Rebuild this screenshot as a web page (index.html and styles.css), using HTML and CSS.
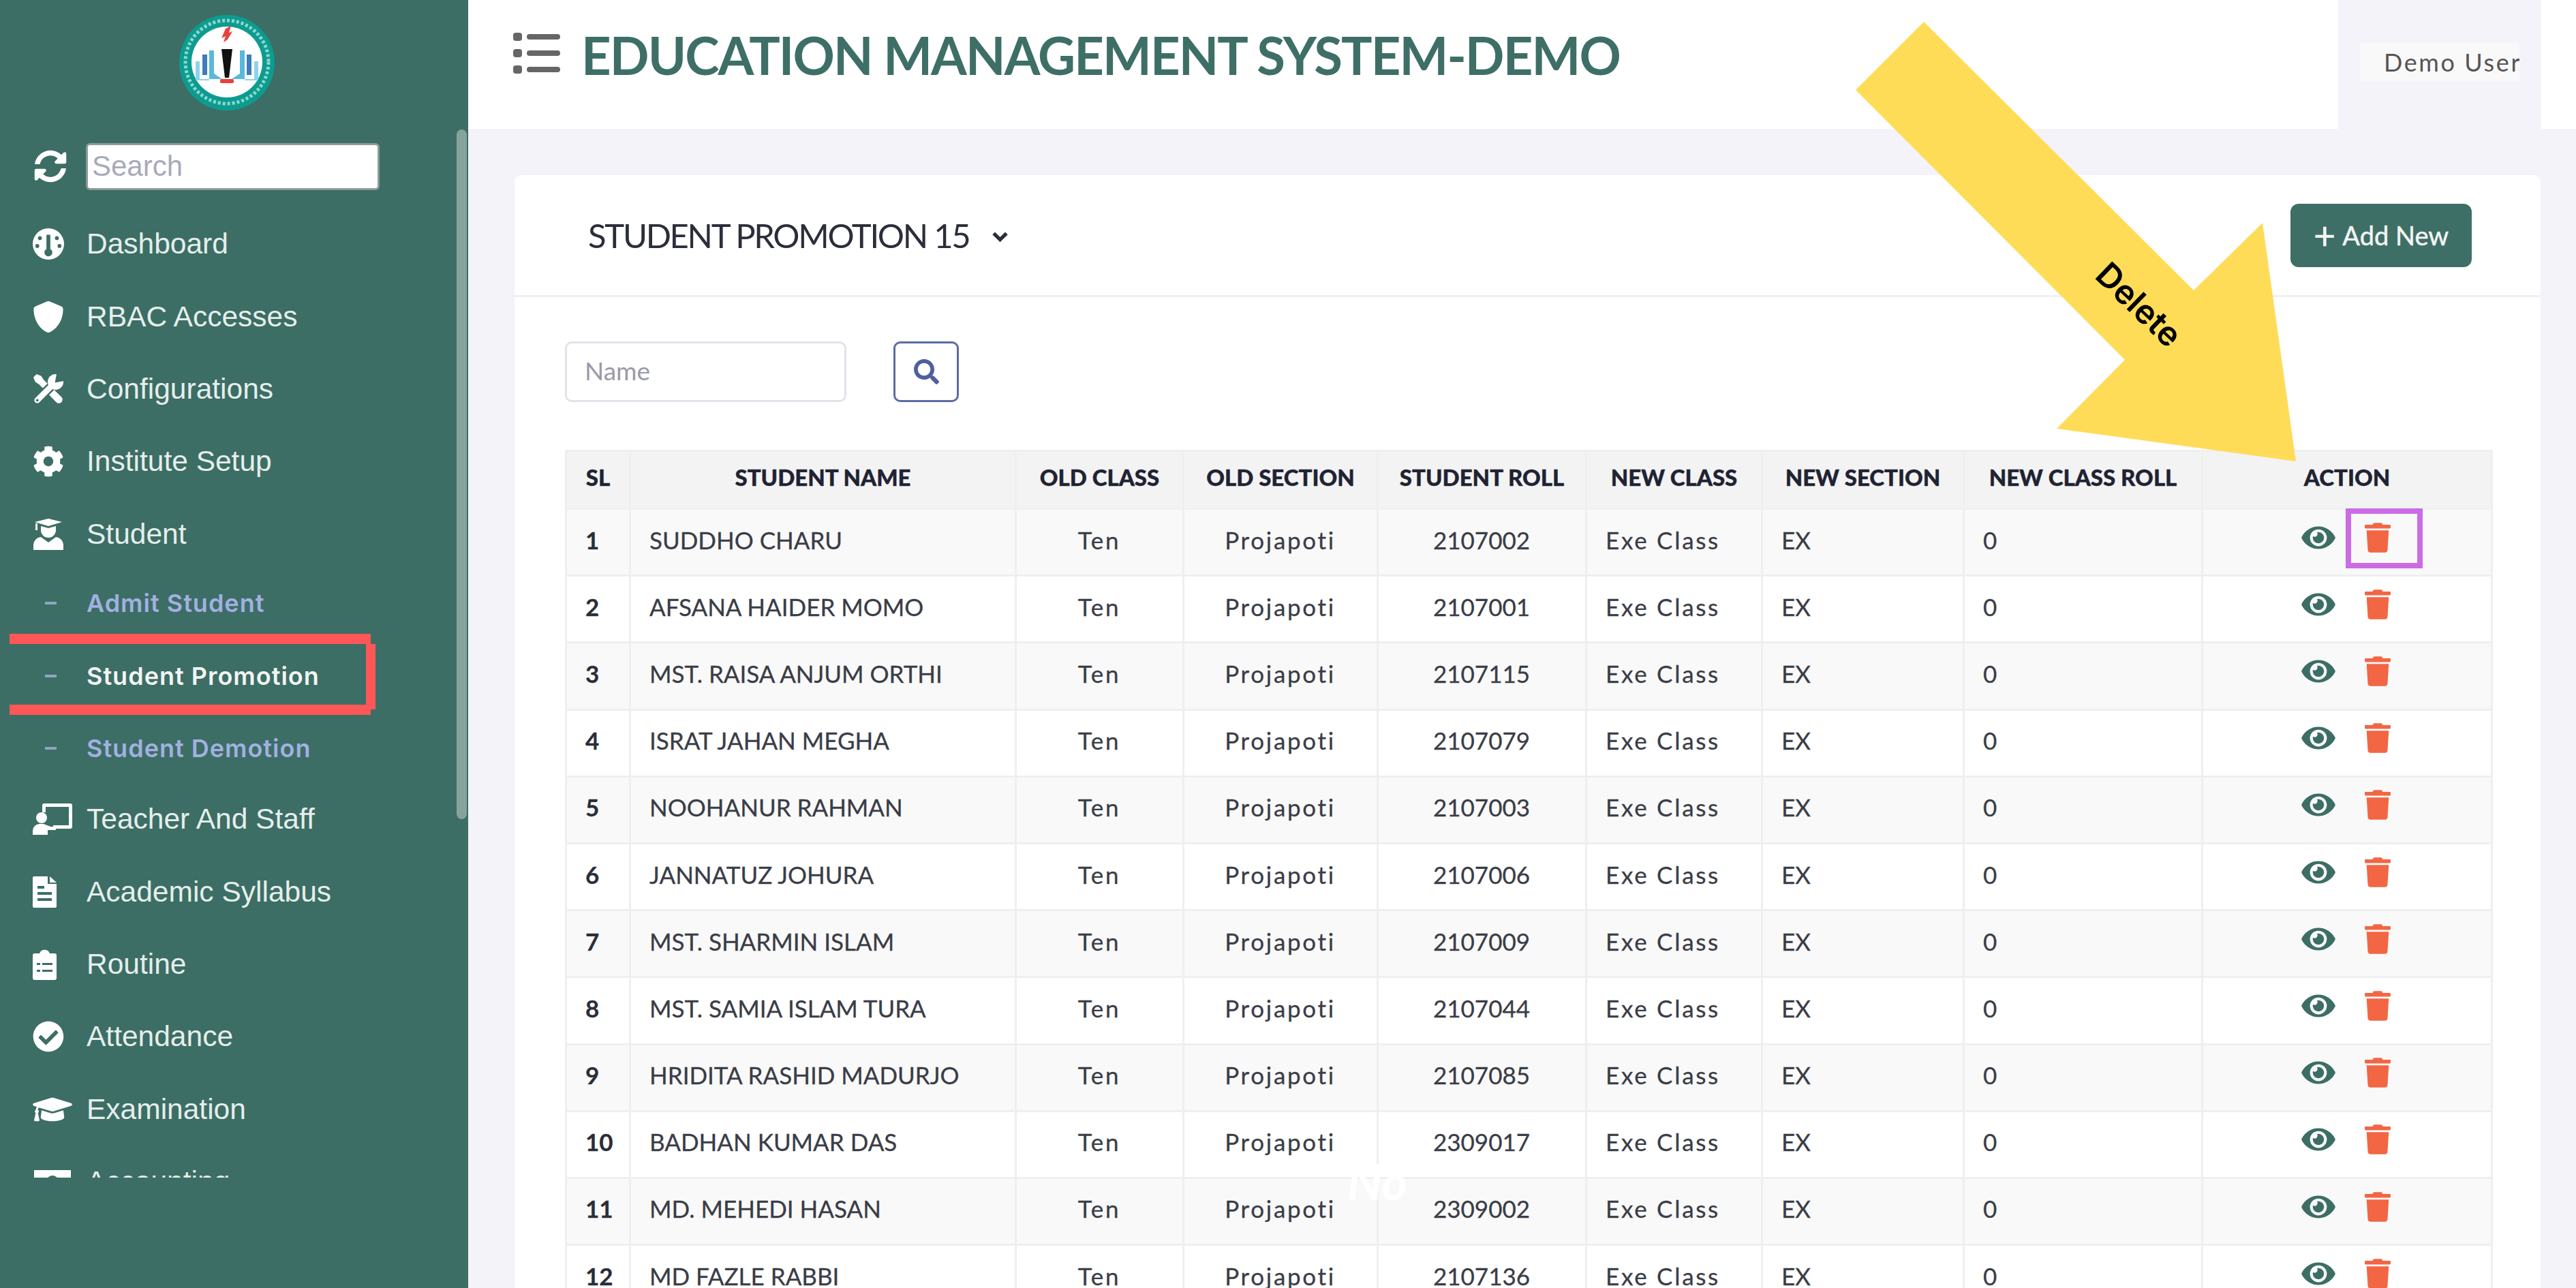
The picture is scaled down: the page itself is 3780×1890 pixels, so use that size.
FILE: index.html
```html
<!DOCTYPE html>
<html lang="en">
  <head>
    <meta charset="UTF-8" />
    <title>Education Management System</title>
    <link rel="stylesheet" href="styles.css">
  </head>
  <body>
    <aside class="sidebar">
      <div class="logo">
        <svg class="logo-img" viewBox="0 0 140 140">
          <circle cx="70" cy="70" r="70" fill="#0c9c8f" />
          <circle cx="70" cy="69" r="52" fill="#fff" />
          <circle cx="70" cy="69" r="61" fill="none" stroke="#8fd6cf" stroke-width="5" stroke-dasharray="4 3" />
          <path d="M68 20l8-4-3 10 5-2-7 12-6 4 3-9-6 3z" fill="#e8413c" />
          <path d="M62 50h16l-5 42h-6z" fill="#111" />
          <rect x="60" y="94" width="20" height="6" rx="2" fill="#e8413c" />
          <path d="M44 52h7v34l12 8H44zM96 52h-7v34l-12 8h19z" fill="#5ab8dc" />
          <path d="M34 58h7v30h-7zM99 58h7v30h-7z" fill="#3f7cb8" />
          <path d="M24 68h6v26h14v2H24zM116 68h-6v26H96v2h20z" fill="#8ed3ea" />
        </svg>
      </div>

      <div class="search-row">
        <svg class="ico" viewBox="0 0 512 512"><path d="M370.72 133.28C339.458 104.008 298.888 87.962 255.848 88c-77.458.068-144.328 53.178-162.791 126.85-1.344 5.363-6.122 9.15-11.651 9.15H24.103c-7.498 0-13.194-6.807-11.807-14.176C33.933 94.924 134.813 8 256 8c66.448 0 126.791 26.136 171.315 68.685L463.03 40.97C478.149 25.851 504 36.559 504 57.941V192c0 13.255-10.745 24-24 24H345.941c-21.382 0-32.09-25.851-16.971-40.971l41.75-41.749zM32 296h134.059c21.382 0 32.09 25.851 16.971 40.971l-41.75 41.75c31.262 29.273 71.835 45.319 114.876 45.28 77.418-.07 144.315-53.144 162.787-126.849 1.344-5.363 6.122-9.15 11.651-9.15h57.304c7.498 0 13.194 6.807 11.807 14.176C478.067 417.076 377.187 504 256 504c-66.448 0-126.791-26.136-171.315-68.685L48.97 471.03C33.851 486.149 8 475.441 8 454.059V320c0-13.255 10.745-24 24-24z" /></svg>
        <input class="side-search" type="text" placeholder="Search" />
      </div>

      <nav class="menu">
        <a class="menu-item">
          <span class="ico-box">
            <svg class="ico" viewBox="0 0 48 48">
              <circle cx="24" cy="24" r="24" />
              <g fill="#3c6e65">
                <path d="M21 6h6v22a5 5 0 0 1 3 5 6 6 0 0 1-12 0 5 5 0 0 1 3-5z" transform="translate(0 4)" />
                <circle cx="11" cy="15" r="3" />
                <circle cx="37" cy="15" r="3" />
                <circle cx="7" cy="27" r="3" />
                <circle cx="41" cy="27" r="3" />
              </g>
            </svg>
          </span>
          Dashboard
        </a>
        <a class="menu-item">
          <span class="ico-box">
            <svg class="ico" viewBox="0 0 512 512"><path d="M466.5 83.7l-192-80a48.15 48.15 0 0 0-36.9 0l-192 80C27.7 91.1 16 108.6 16 128c0 198.5 114.5 335.7 221.5 380.3 11.8 4.9 25.1 4.9 36.9 0C360.1 472.6 496 349.3 496 128c0-19.4-11.7-36.9-29.5-44.3z" /></svg>
          </span>
          RBAC Accesses
        </a>
        <a class="menu-item">
          <span class="ico-box">
            <svg class="ico" viewBox="0 0 48 48">
              <path d="M1 6l5-5 7 3 4 6 27 26a5 5 0 0 1-8 8L10 17 4 13z" />
              <path d="M7 41L31 17" stroke="#3c6e65" stroke-width="14" />
              <path d="M7 41L31 17" stroke="#fff" stroke-width="9" stroke-linecap="round" />
              <circle cx="35" cy="13" r="12" />
              <path d="M34 14L50 11V-2H37z" fill="#3c6e65" />
              <circle cx="7" cy="41" r="2" fill="#3c6e65" />
            </svg>
          </span>
          Configurations
        </a>
        <a class="menu-item">
          <span class="ico-box">
            <svg class="ico" viewBox="0 0 512 512"><path d="M487.4 315.7l-42.6-24.6c4.3-23.2 4.3-47 0-70.2l42.6-24.6c4.9-2.8 7.1-8.6 5.5-14-11.1-35.6-30-67.8-54.7-94.6-3.8-4.1-10-5.1-14.8-2.3L380.8 110c-17.9-15.4-38.5-27.3-60.8-35.1V25.8c0-5.6-3.9-10.5-9.4-11.7-36.7-8.2-74.3-7.8-109.2 0-5.5 1.2-9.4 6.1-9.4 11.7V75c-22.2 7.9-42.8 19.8-60.8 35.1L88.7 85.5c-4.9-2.8-11-1.9-14.8 2.3-24.7 26.7-43.6 58.9-54.7 94.6-1.7 5.4.6 11.2 5.5 14L67.3 221c-4.3 23.2-4.3 47 0 70.2l-42.6 24.6c-4.9 2.8-7.1 8.6-5.5 14 11.1 35.6 30 67.8 54.7 94.6 3.8 4.1 10 5.1 14.8 2.3l42.6-24.6c17.9 15.4 38.5 27.3 60.8 35.1v49.2c0 5.6 3.9 10.5 9.4 11.7 36.7 8.2 74.3 7.8 109.2 0 5.5-1.2 9.4-6.1 9.4-11.7v-49.2c22.2-7.9 42.8-19.8 60.8-35.1l42.6 24.6c4.9 2.8 11 1.9 14.8-2.3 24.7-26.7 43.6-58.9 54.7-94.6 1.5-5.5-.7-11.3-5.6-14.1zM256 336c-44.1 0-80-35.9-80-80s35.9-80 80-80 80 35.9 80 80-35.9 80-80 80z" /></svg>
          </span>
          Institute Setup
        </a>
        <a class="menu-item">
          <span class="ico-box">
            <svg class="ico" viewBox="0 0 44 46">
              <path d="M2 5L22 0l20 5-20 6zM3 7h3v10H3z" />
              <path d="M11 11l11 3 11-3v6a11 11 0 0 1-22 0z" />
              <path d="M0 46v-8a12 12 0 0 1 11-11l11 8 11-8a12 12 0 0 1 11 11v8z" />
            </svg>
          </span>
          Student
        </a>
        <a class="menu-item sub"><span class="ico-box"><span class="dash"></span></span>Admit Student</a>
        <a class="menu-item sub active"><span class="ico-box"><span class="dash"></span></span>Student Promotion</a>
        <a class="menu-item sub"><span class="ico-box"><span class="dash"></span></span>Student Demotion</a>
        <a class="menu-item">
          <span class="ico-box">
            <svg class="ico ico-wide" viewBox="0 0 58 46">
              <path d="M14 3a3 3 0 0 1 3-3h38a3 3 0 0 1 3 3v31a3 3 0 0 1-3 3H36v-5h17V5H19v8h-5z" />
              <path d="M30 32h13v5H30z" />
              <circle cx="13" cy="21" r="8" />
              <path d="M0 46v-6a10 10 0 0 1 10-10h6l10 4h8v5H22v7z" />
            </svg>
          </span>
          Teacher And Staff
        </a>
        <a class="menu-item">
          <span class="ico-box">
            <svg class="ico ico-file" viewBox="0 0 35 46">
              <path fill-rule="evenodd" d="M2 0h20v11h13v33a2 2 0 0 1-2 2H2a2 2 0 0 1-2-2V2a2 2 0 0 1 2-2zM7 14v4h10v-4zM7 23v4h21v-4zM7 32v4h21v-4z" />
              <path d="M25 0l10 9H25z" />
            </svg>
          </span>
          Academic Syllabus
        </a>
        <a class="menu-item">
          <span class="ico-box">
            <svg class="ico ico-file" viewBox="0 0 35 46">
              <path fill-rule="evenodd" d="M3 7h7a8 8 0 0 1 15 0h7a3 3 0 0 1 3 3v33a3 3 0 0 1-3 3H3a3 3 0 0 1-3-3V10a3 3 0 0 1 3-3zM6 21v3h5v-3zM14 21v3h15v-3zM6 31v3h5v-3zM14 31v3h15v-3z" />
            </svg>
          </span>
          Routine
        </a>
        <a class="menu-item">
          <span class="ico-box">
            <svg class="ico" viewBox="0 0 512 512"><path d="M504 256c0 136.967-111.033 248-248 248S8 392.967 8 256 119.033 8 256 8s248 111.033 248 248zM227.314 387.314l184-184c6.248-6.248 6.248-16.379 0-22.627l-22.627-22.627c-6.248-6.249-16.379-6.249-22.628 0L216 308.118l-70.059-70.059c-6.248-6.248-16.379-6.248-22.628 0l-22.627 22.627c-6.248 6.248-6.248 16.379 0 22.627l104 104c6.249 6.249 16.379 6.249 22.628.001z" /></svg>
          </span>
          Attendance
        </a>
        <a class="menu-item">
          <span class="ico-box">
            <svg class="ico ico-wide" viewBox="0 0 640 512"><path d="M622.34 153.2L343.4 67.5c-15.2-4.67-31.6-4.67-46.79 0L17.66 153.2c-23.54 7.23-23.54 38.36 0 45.59l48.63 14.94c-10.67 13.19-17.23 29.28-17.88 46.9C38.78 266.15 32 276.11 32 288c0 10.78 5.68 19.85 13.86 25.65L20.33 428.53C18.11 438.52 25.71 448 35.94 448h56.11c10.24 0 17.84-9.48 15.62-19.47L82.14 313.65C90.32 307.85 96 298.78 96 288c0-11.57-6.47-21.25-15.66-26.87.76-15.02 8.44-28.3 20.69-36.72L296.6 284.5c9.06 2.78 26.44 6.25 46.79 0l278.95-85.7c23.55-7.24 23.55-38.36 0-45.6zM352.79 315.09c-28.53 8.76-52.84 3.92-65.59 0l-145.02-44.55L128 384c0 35.35 85.96 64 192 64s192-28.65 192-64l-14.18-113.47-145.03 44.56z" /></svg>
          </span>
          Examination
        </a>
        <a class="menu-item">
          <span class="ico-box">
            <svg class="ico ico-wide" viewBox="0 0 58 46">
              <path fill-rule="evenodd" d="M2 6h54v34H2zM29 14a9 9 0 1 0 .01 0z" />
            </svg>
          </span>
          Accounting
        </a>
      </nav>
      <div class="side-thumb"></div>
    </aside>

    <main class="main">
      <header class="topbar">
        <svg class="menu-toggle" viewBox="0 0 69 60">
          <rect x="0" y="0" width="13" height="12" rx="4" />
          <rect x="0" y="24" width="13" height="12" rx="4" />
          <rect x="0" y="48" width="13" height="12" rx="4" />
          <rect x="20" y="2" width="49" height="8" rx="4" />
          <rect x="20" y="26" width="49" height="8" rx="4" />
          <rect x="20" y="50" width="49" height="8" rx="4" />
        </svg>
        <h1 class="app-title">EDUCATION MANAGEMENT SYSTEM-DEMO</h1>
        <div class="user-area">
          <div class="user-pill">Demo User</div>
        </div>
      </header>

      <section class="content">
        <div class="card">
          <div class="card-head">
            <h2 class="card-title">STUDENT PROMOTION 15</h2>
            <svg class="chevron" viewBox="0 0 24 16"><path d="M3 3l9 9 9-9" /></svg>
            <button class="add-btn"><span class="add-plus">+</span>Add New</button>
          </div>
          <div class="card-body">
            <div class="filter-row">
              <input class="name-input" type="text" placeholder="Name" />
              <button class="search-btn">
                <svg viewBox="0 0 512 512"><path d="M505 442.7L405.3 343c-4.5-4.5-10.6-7-17-7H372c27.6-35.3 44-79.7 44-128C416 93.1 322.9 0 208 0S0 93.1 0 208s93.1 208 208 208c48.3 0 92.7-16.4 128-44v16.3c0 6.4 2.5 12.5 7 17l99.7 99.7c9.4 9.4 24.6 9.4 33.9 0l28.3-28.3c9.4-9.4 9.4-24.6.1-34zM208 336c-70.7 0-128-57.2-128-128 0-70.7 57.2-128 128-128 70.7 0 128 57.2 128 128 0 70.7-57.2 128-128 128z" /></svg>
              </button>
            </div>

            <svg class="icon-defs" width="0" height="0">
              <symbol id="eye" viewBox="0 0 576 512"><path d="M572.52 241.4C518.29 135.59 410.93 64 288 64S57.68 135.64 3.48 241.41a32.35 32.35 0 0 0 0 29.19C57.71 376.41 165.07 448 288 448s230.32-71.64 284.52-177.41a32.35 32.35 0 0 0 0-29.19zM288 400a144 144 0 1 1 144-144 143.93 143.93 0 0 1-144 144zm0-240a95.31 95.31 0 0 0-25.31 3.79 47.85 47.85 0 0 1-66.9 66.9A95.78 95.78 0 1 0 288 160z" /></symbol>
              <symbol id="trash" viewBox="0 0 448 512"><path d="M432 32H312l-9.4-18.7A24 24 0 0 0 281.1 0H166.8a23.72 23.72 0 0 0-21.4 13.3L136 32H16A16 16 0 0 0 0 48v32a16 16 0 0 0 16 16h416a16 16 0 0 0 16-16V48a16 16 0 0 0-16-16zM53.2 467a48 48 0 0 0 47.9 45h245.8a48 48 0 0 0 47.9-45L416 128H32z" /></symbol>
            </svg>

            <table class="promo-table">
              <thead>
                <tr>
                  <th>SL</th>
                  <th>STUDENT NAME</th>
                  <th>OLD CLASS</th>
                  <th>OLD SECTION</th>
                  <th>STUDENT ROLL</th>
                  <th>NEW CLASS</th>
                  <th>NEW SECTION</th>
                  <th>NEW CLASS ROLL</th>
                  <th>ACTION</th>
                </tr>
              </thead>
              <tbody>
                <tr>
                  <td class="sl">1</td><td>SUDDHO CHARU</td><td class="mid low">Ten</td><td class="mid low">Projapoti</td><td class="mid">2107002</td><td class="low">Exe Class</td><td>EX</td><td>0</td>
                  <td class="actions"><svg class="eye"><use href="#eye" /></svg><svg class="trash"><use href="#trash" /></svg></td>
                </tr>
                <tr>
                  <td class="sl">2</td><td>AFSANA HAIDER MOMO</td><td class="mid low">Ten</td><td class="mid low">Projapoti</td><td class="mid">2107001</td><td class="low">Exe Class</td><td>EX</td><td>0</td>
                  <td class="actions"><svg class="eye"><use href="#eye" /></svg><svg class="trash"><use href="#trash" /></svg></td>
                </tr>
                <tr>
                  <td class="sl">3</td><td>MST. RAISA ANJUM ORTHI</td><td class="mid low">Ten</td><td class="mid low">Projapoti</td><td class="mid">2107115</td><td class="low">Exe Class</td><td>EX</td><td>0</td>
                  <td class="actions"><svg class="eye"><use href="#eye" /></svg><svg class="trash"><use href="#trash" /></svg></td>
                </tr>
                <tr>
                  <td class="sl">4</td><td>ISRAT JAHAN MEGHA</td><td class="mid low">Ten</td><td class="mid low">Projapoti</td><td class="mid">2107079</td><td class="low">Exe Class</td><td>EX</td><td>0</td>
                  <td class="actions"><svg class="eye"><use href="#eye" /></svg><svg class="trash"><use href="#trash" /></svg></td>
                </tr>
                <tr>
                  <td class="sl">5</td><td>NOOHANUR RAHMAN</td><td class="mid low">Ten</td><td class="mid low">Projapoti</td><td class="mid">2107003</td><td class="low">Exe Class</td><td>EX</td><td>0</td>
                  <td class="actions"><svg class="eye"><use href="#eye" /></svg><svg class="trash"><use href="#trash" /></svg></td>
                </tr>
                <tr>
                  <td class="sl">6</td><td>JANNATUZ JOHURA</td><td class="mid low">Ten</td><td class="mid low">Projapoti</td><td class="mid">2107006</td><td class="low">Exe Class</td><td>EX</td><td>0</td>
                  <td class="actions"><svg class="eye"><use href="#eye" /></svg><svg class="trash"><use href="#trash" /></svg></td>
                </tr>
                <tr>
                  <td class="sl">7</td><td>MST. SHARMIN ISLAM</td><td class="mid low">Ten</td><td class="mid low">Projapoti</td><td class="mid">2107009</td><td class="low">Exe Class</td><td>EX</td><td>0</td>
                  <td class="actions"><svg class="eye"><use href="#eye" /></svg><svg class="trash"><use href="#trash" /></svg></td>
                </tr>
                <tr>
                  <td class="sl">8</td><td>MST. SAMIA ISLAM TURA</td><td class="mid low">Ten</td><td class="mid low">Projapoti</td><td class="mid">2107044</td><td class="low">Exe Class</td><td>EX</td><td>0</td>
                  <td class="actions"><svg class="eye"><use href="#eye" /></svg><svg class="trash"><use href="#trash" /></svg></td>
                </tr>
                <tr>
                  <td class="sl">9</td><td>HRIDITA RASHID MADURJO</td><td class="mid low">Ten</td><td class="mid low">Projapoti</td><td class="mid">2107085</td><td class="low">Exe Class</td><td>EX</td><td>0</td>
                  <td class="actions"><svg class="eye"><use href="#eye" /></svg><svg class="trash"><use href="#trash" /></svg></td>
                </tr>
                <tr>
                  <td class="sl">10</td><td>BADHAN KUMAR DAS</td><td class="mid low">Ten</td><td class="mid low">Projapoti</td><td class="mid">2309017</td><td class="low">Exe Class</td><td>EX</td><td>0</td>
                  <td class="actions"><svg class="eye"><use href="#eye" /></svg><svg class="trash"><use href="#trash" /></svg></td>
                </tr>
                <tr>
                  <td class="sl">11</td><td>MD. MEHEDI HASAN</td><td class="mid low">Ten</td><td class="mid low">Projapoti</td><td class="mid">2309002</td><td class="low">Exe Class</td><td>EX</td><td>0</td>
                  <td class="actions"><svg class="eye"><use href="#eye" /></svg><svg class="trash"><use href="#trash" /></svg></td>
                </tr>
                <tr>
                  <td class="sl">12</td><td>MD FAZLE RABBI</td><td class="mid low">Ten</td><td class="mid low">Projapoti</td><td class="mid">2107136</td><td class="low">Exe Class</td><td>EX</td><td>0</td>
                  <td class="actions"><svg class="eye"><use href="#eye" /></svg><svg class="trash"><use href="#trash" /></svg></td>
                </tr>
              </tbody>
            </table>
          </div>
        </div>
      </section>
    </main>

    <!-- annotations drawn on top of the screenshot -->
    <svg class="annotations" viewBox="0 0 3780 1890">
      <polygon class="arrow" points="2823,32 2723,132 3118,528 3018,629 3369,677 3320,327 3219,426" />
      <text class="arrow-label" transform="translate(3136 450) rotate(44)" text-anchor="middle" dominant-baseline="middle">Delete</text>
      <g class="mark-red">
        <rect x="14" y="930" width="530" height="15" />
        <rect x="14" y="1034" width="530" height="15" />
        <rect x="537" y="945" width="14" height="96" />
      </g>
      <rect class="mark-pink" x="3446" y="750" width="105" height="80" />
    </svg>
    <span class="stray-text">No</span>
  </body>
</html>
```

FILE: styles.css
```css
* {
  box-sizing: border-box;
  margin: 0;
  padding: 0;
}

html,
body {
  width: 3780px;
  height: 1890px;
  overflow: hidden;
}

body {
  position: relative;
  display: flex;
  font-family: "Lato", "Liberation Sans", sans-serif;
  background: #f3f3f9;
  color: #33363f;
}

/* Sidebar */
.sidebar {
  position: relative;
  width: 687px;
  height: 100%;
  flex-shrink: 0;
  background: #3c6e65;
  color: #e6eeec;
  font-family: "Liberation Sans", Arial, sans-serif;
  font-size: 42.5px;
}

.logo {
  display: flex;
  justify-content: center;
  height: 210px;
  padding-top: 22px;
  padding-right: 21px;
}

.logo-img {
  width: 140px;
  height: 140px;
}

.search-row {
  display: flex;
  align-items: center;
  gap: 28px;
  height: 68px;
  padding-left: 50px;
}

.search-row .ico {
  width: 48px;
  height: 48px;
}

.side-search {
  width: 431px;
  height: 69px;
  padding-left: 6px;
  border: 3px solid #8f9a98;
  border-radius: 6px;
  background: #fff;
  font-family: "Liberation Sans", Arial, sans-serif;
  font-size: 42px;
}

.side-search::placeholder {
  color: #a9a9bb;
}

.menu {
  height: 1423px;
  margin-top: 27px;
  overflow: hidden;
}

.menu-item {
  display: flex;
  align-items: center;
  height: 106.4px;
  padding-left: 48px;
  white-space: nowrap;
}

.menu-item:not(.sub) + .sub {
  margin-top: -5px;
}

.sub + .menu-item:not(.sub) {
  margin-top: -2px;
}

.ico-box {
  display: flex;
  align-items: center;
  width: 79px;
  flex-shrink: 0;
}

.ico {
  display: block;
  width: 46px;
  height: 46px;
  fill: #fff;
}

.ico-wide {
  width: 58px;
}

.ico-file {
  width: 35px;
}

.sub {
  font-family: "Inter", sans-serif;
  font-size: 36px;
  font-weight: 600;
  letter-spacing: 1px;
  color: #a2b0e0;
}

.sub.active {
  color: #f2f5f3;
}

.dash {
  display: block;
  width: 17px;
  height: 4px;
  margin-left: 18px;
  background: #8ea5c2;
}

.side-thumb {
  position: absolute;
  top: 190px;
  right: 2px;
  width: 15px;
  height: 1012px;
  border-radius: 8px;
  background: #87a39d;
}

/* Main column */
.main {
  flex: 1;
  min-width: 0;
  display: flex;
  flex-direction: column;
}

.topbar {
  display: flex;
  align-items: flex-start;
  height: 189px;
  padding-left: 66px;
  background: #fff;
  flex-shrink: 0;
}

.menu-toggle {
  width: 69px;
  height: 60px;
  margin-top: 48px;
  fill: #666;
}

.app-title {
  margin-left: 31px;
  margin-top: 34px;
  font-size: 76px;
  font-weight: 700;
  line-height: 94px;
  letter-spacing: -1.9px;
  color: #3e6f66;
  white-space: nowrap;
}

.user-area {
  width: 298px;
  height: 100%;
  margin-left: auto;
  margin-right: 51px;
  padding: 63px 32px 0;
  background: #f3f3f9;
}

.user-pill {
  width: 234px;
  height: 56px;
  padding-left: 35px;
  overflow: hidden;
  background: #f9f9f9;
  font-size: 36px;
  line-height: 56px;
  letter-spacing: 2.6px;
  color: #555;
  white-space: nowrap;
}

.content {
  padding: 68px 52px 0 68px;
}

.card {
  border-radius: 10px;
  background: #fff;
}

.card-head {
  display: flex;
  align-items: center;
  height: 179px;
  padding: 0 101px 0 108px;
  border-bottom: 3px solid #eef1f1;
}

.card-title {
  font-size: 49px;
  font-weight: 400;
  letter-spacing: -2.3px;
  color: #2b2e3a;
  white-space: nowrap;
}

.chevron {
  width: 25px;
  height: 17px;
  margin-left: 33px;
  margin-top: 4px;
  fill: none;
  stroke: #2b2e3a;
  stroke-width: 5;
}

.add-btn {
  display: flex;
  align-items: center;
  justify-content: center;
  gap: 10px;
  width: 266px;
  height: 93px;
  margin-left: auto;
  border: 0;
  border-radius: 12px;
  background: #3e6f66;
  color: #f2f5f4;
  font-family: "Lato", sans-serif;
  font-size: 38px;
  -webkit-text-stroke: 0.5px #f2f5f4;
}

.add-plus {
  font-size: 56px;
  line-height: 1;
}

.card-body {
  padding: 65px 73px 0 74px;
}

.filter-row {
  display: flex;
  gap: 69px;
  height: 89px;
  margin-bottom: 70px;
}

.name-input {
  width: 413px;
  height: 89px;
  padding: 0 0 4px 26px;
  border: 3px solid #dfe3ea;
  border-radius: 10px;
  background: #fff;
  font-family: "Lato", sans-serif;
  font-size: 37px;
}

.name-input::placeholder {
  color: #9a9aa8;
}

.search-btn {
  display: flex;
  align-items: center;
  justify-content: center;
  width: 96px;
  height: 89px;
  border: 3px solid #5c6ba6;
  border-radius: 10px;
  background: #fff;
}

.search-btn svg {
  width: 37px;
  height: 37px;
  fill: #4f5f9f;
}

.icon-defs {
  position: absolute;
}

/* Table */
.promo-table {
  width: 2826px;
  table-layout: fixed;
  border-collapse: collapse;
  font-size: 35px;
}

.promo-table th,
.promo-table td {
  border: 3px solid #eef0f0;
}

.promo-table th {
  height: 85px;
  padding-bottom: 8px;
  background: #f3f3f3;
  font-size: 33px;
  font-weight: 900;
  color: #1f2333;
  text-align: center;
  white-space: nowrap;
  -webkit-text-stroke: 0.4px #1f2333;
}

.promo-table th:nth-child(1) { width: 94px; }
.promo-table th:nth-child(2) { width: 566px; }
.promo-table th:nth-child(3) { width: 246px; }
.promo-table th:nth-child(4) { width: 285px; }
.promo-table th:nth-child(5) { width: 306px; }
.promo-table th:nth-child(6) { width: 258px; }
.promo-table th:nth-child(7) { width: 296px; }
.promo-table th:nth-child(8) { width: 350px; }
.promo-table th:nth-child(9) { width: 425px; }

.promo-table td {
  height: 98.2px;
  padding: 0 28px 8px 27px;
  color: #3a3d47;
  white-space: nowrap;
  -webkit-text-stroke: 0.3px #3a3d47;
}

.promo-table tbody tr:nth-child(odd) {
  background: #f9f9f9;
}

.promo-table .sl {
  font-weight: 700;
  color: #2a2d38;
}

.promo-table .mid {
  text-align: center;
}

.promo-table .low {
  letter-spacing: 2.7px;
}

.promo-table .actions {
  padding: 0 0 18px 144px;
}

.eye {
  width: 50px;
  height: 44px;
  fill: #3c6e65;
  vertical-align: middle;
}

.trash {
  width: 38px;
  height: 44px;
  margin-left: 43px;
  fill: #f26644;
  vertical-align: middle;
}

/* Annotations */
.annotations {
  position: absolute;
  top: 0;
  left: 0;
  width: 3780px;
  height: 1890px;
  pointer-events: none;
}

.arrow {
  fill: #ffdc58;
}

.arrow-label {
  font-family: "Inter", sans-serif;
  font-size: 49px;
  font-weight: 600;
  fill: #000;
}

.mark-red {
  fill: #ff5757;
}

.mark-pink {
  fill: none;
  stroke: #cb6ce6;
  stroke-width: 8;
}

.stray-text {
  position: absolute;
  left: 1977px;
  top: 1690px;
  font-size: 72px;
  font-weight: 700;
  font-style: italic;
  color: #fff;
}
```
